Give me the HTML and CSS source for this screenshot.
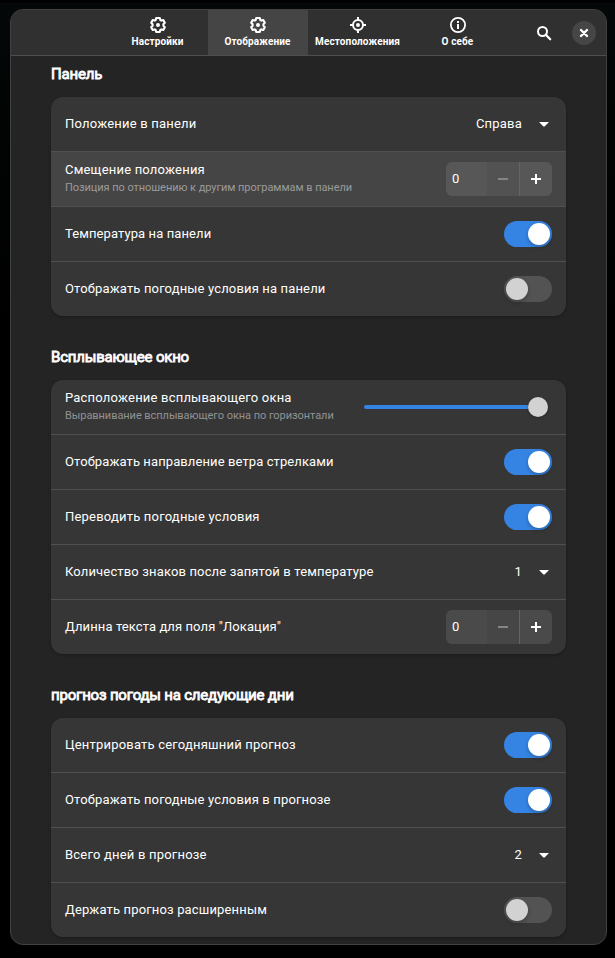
FILE: index.html
```html
<!DOCTYPE html>
<html lang="ru">
<head>
<meta charset="utf-8">
<title>Отображение</title>
<link rel="stylesheet" href="styles.css">
</head>
<body>
<svg width="0" height="0" class="defs">
  <symbol id="gear" viewBox="0 0 18 18">
    <path d="M7.200 2h3.600l.5 2 1 .6 2-.6 1.500 2.800-1.400 1.500v1.400l1.400 1.500-1.500 2.800-2-.6-1 .6-.5 2H7.200l-.5-2-1-.6-2 .6-1.500-2.800 1.400-1.500V8.300L2.200 6.800l1.500-2.800 2 .6 1-.6z" fill="none" stroke="currentColor" stroke-width="2.100" stroke-linejoin="round"/>
    <circle cx="9" cy="9" r="2" fill="currentColor"/>
  </symbol>
</svg>
<main class="window">
  <header class="header">
    <nav class="tabs">
      <div class="tab"><svg class="tab-icon"><use href="#gear"/></svg><span>Настройки</span></div>
      <div class="tab active"><svg class="tab-icon"><use href="#gear"/></svg><span>Отображение</span></div>
      <div class="tab"><svg class="tab-icon" viewBox="0 0 18 18"><g fill="none" stroke="currentColor" stroke-width="2"><circle cx="9" cy="9" r="5"/><path d="M9 1v3M9 14v3M1 9h3M14 9h3"/></g><circle cx="9" cy="9" r="2" fill="currentColor"/></svg><span>Местоположения</span></div>
      <div class="tab"><svg class="tab-icon" viewBox="0 0 18 18"><circle cx="9" cy="9" r="7.100" fill="none" stroke="currentColor" stroke-width="1.800"/><path d="M8 5h2v2H8zM8 8h2v5H8z" fill="currentColor"/></svg><span>О себе</span></div>
    </nav>
    <svg class="search" viewBox="0 0 16 16" fill="none" stroke="currentColor"><circle cx="6.500" cy="6.500" r="4.500" stroke-width="2"/><path d="M9.800 9.800l4.400 4.400" stroke-width="2.300" stroke-linecap="round"/></svg>
    <div class="close"><svg viewBox="0 0 10 10"><path d="M2 2l6 6M8 2L2 8" stroke="currentColor" stroke-width="2.400" stroke-linecap="round"/></svg></div>
  </header>
  <div class="content">
    <h2>Панель</h2>
    <section class="card">
      <div class="row"><span class="label">Положение в панели</span><div class="select"><span>Справа</span><i class="caret"></i></div></div>
      <div class="row hover"><div class="text"><span class="label">Смещение положения</span><span class="sub">Позиция по отношению к другим программам в панели</span></div><div class="spin"><span>0</span><b class="minus"></b><b class="plus"></b></div></div>
      <div class="row"><span class="label tight">Температура на панели</span><div class="switch on"></div></div>
      <div class="row"><span class="label snug">Отображать погодные условия на панели</span><div class="switch"></div></div>
    </section>
    <h2>Всплывающее окно</h2>
    <section class="card">
      <div class="row"><div class="text"><span class="label">Расположение всплывающего окна</span><span class="sub">Выравнивание всплывающего окна по горизонтали</span></div><div class="slider"><i class="track"></i><i class="knob"></i></div></div>
      <div class="row"><span class="label tight">Отображать направление ветра стрелками</span><div class="switch on"></div></div>
      <div class="row"><span class="label">Переводить погодные условия</span><div class="switch on"></div></div>
      <div class="row"><span class="label snug">Количество знаков после запятой в температуре</span><div class="select"><span>1</span><i class="caret"></i></div></div>
      <div class="row"><span class="label tight">Длинна текста для поля "Локация"</span><div class="spin"><span>0</span><b class="minus"></b><b class="plus"></b></div></div>
    </section>
    <h2>прогноз погоды на следующие дни</h2>
    <section class="card">
      <div class="row"><span class="label">Центрировать сегодняшний прогноз</span><div class="switch on"></div></div>
      <div class="row"><span class="label snug">Отображать погодные условия в прогнозе</span><div class="switch on"></div></div>
      <div class="row"><span class="label">Всего дней в прогнозе</span><div class="select"><span>2</span><i class="caret"></i></div></div>
      <div class="row"><span class="label snug">Держать прогноз расширенным</span><div class="switch"></div></div>
    </section>
  </div>
</main>
</body>
</html>
```
FILE: styles.css
```css
* { box-sizing: border-box; }
html { background: #000; }
body {
  margin: 0;
  height: 958px;
  padding: 9px 8px 13px 10px;
  overflow: hidden;
  background: linear-gradient(#000 0 2px, #040808 3px, #020404 110px, #000 350px);
  color: #fff;
  font: 13px/18px Roboto, sans-serif;
}
.defs { display: block; height: 0; width: 0; }
.window {
  height: 936px;
  border: 1px solid #414141;
  border-radius: 13px;
  background: #242424;
  overflow: hidden;
}
.header {
  height: 46px;
  display: flex;
  align-items: center;
  background: #303030;
  border-bottom: 1px solid #4e4e4e;
}
.tabs { display: flex; align-self: stretch; margin-left: 97px; }
.tab {
  width: 100px;
  display: flex;
  flex-direction: column;
  align-items: center;
  padding: 6px 1px 0 0;
  font-size: 10px;
  line-height: 16px;
  font-weight: 700;
  letter-spacing: .12px;
  white-space: nowrap;
}
.tab.active { background: #454545; }
.tab-icon { width: 18px; height: 18px; flex: none; }
.search { width: 16px; height: 16px; margin-left: 28px; }
.close {
  width: 24px;
  height: 24px;
  margin-left: 20px;
  border-radius: 50%;
  background: #464646;
  display: flex;
  align-items: center;
  justify-content: center;
}
.close svg { width: 10px; height: 10px; }
.content { padding: 8px 40px 0; }
h2 {
  margin: 0 0 13px;
  font-size: 15px;
  line-height: 20px;
  font-weight: 400;
  letter-spacing: -.2px;
  -webkit-text-stroke: 0.8px #fff;
}
.card {
  width: 515px;
  margin-bottom: 31px;
  border-radius: 12px;
  background: #363636;
  overflow: hidden;
  box-shadow: 0 1px 3px rgba(0, 0, 0, .3);
}
.row {
  height: 55px;
  padding: 0 14px;
  display: flex;
  align-items: center;
  justify-content: space-between;
  border-bottom: 1px solid #505050;
}
.row:last-child { height: 54px; border-bottom: 0; }
.row.hover { background: #454545; }
.text { display: flex; flex-direction: column; }
.label { letter-spacing: .2px; }
.label.snug { letter-spacing: .15px; }
.label.tight { letter-spacing: .1px; }
.sub { font-size: 11px; letter-spacing: -.055px; color: #929292; }
.hover .sub { color: #9b9b9b; }
.select { display: flex; align-items: center; gap: 17px; padding-right: 3px; letter-spacing: .2px; }
.caret { width: 10px; height: 5px; background: #fff; clip-path: polygon(0 0, 100% 0, 100% 12%, 56% 100%, 44% 100%, 0 12%); }
.spin {
  width: 106px;
  height: 34px;
  display: flex;
  border-radius: 6px;
  overflow: hidden;
  background: rgba(255, 255, 255, .1);
  line-height: 33px;
}
.spin span { width: 41px; padding-left: 6px; }
.minus, .plus { width: 33px; display: grid; place-items: center; }
.minus { background: rgba(0, 0, 0, .05); border-right: 1px solid #646464; }
.plus { width: 32px; }
.minus::before, .plus::before, .plus::after { content: ""; grid-area: 1 / 1; width: 10px; height: 2px; background: #fff; }
.minus::before { background: #858585; }
.plus::after { width: 2px; height: 10px; }
.switch {
  width: 48px;
  height: 26px;
  padding: 2px;
  border-radius: 13px;
  background: #535353;
  display: flex;
}
.switch::before {
  content: "";
  width: 22px;
  height: 22px;
  border-radius: 50%;
  background: #d2d2d2;
  box-shadow: 0 2px 4px rgba(0, 0, 0, .25);
}
.switch.on { background: #3584e4; justify-content: flex-end; }
.switch.on::before { background: #fff; }
.slider { width: 184px; margin-right: 4px; display: flex; align-items: center; }
.track { flex: 1; height: 4px; border-radius: 2px 0 0 2px; background: #3584e4; }
.knob { width: 20px; height: 20px; border-radius: 50%; background: #d2d2d2; box-shadow: 0 1px 3px rgba(0, 0, 0, .3); }
```
